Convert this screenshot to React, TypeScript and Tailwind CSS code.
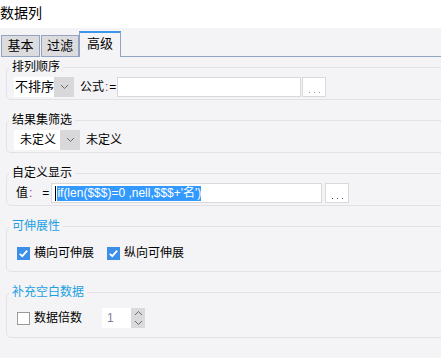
import React from "react";

const font = {
  fontFamily: '"Liberation Sans", "Noto Sans CJK SC", sans-serif',
};

function Chevron({ className = "" }: { className?: string }) {
  return (
    <svg width="9" height="6" viewBox="0 0 9 6" className={className}>
      <path d="M1 1 L4.5 4.5 L8 1" fill="none" stroke="#6b6b6b" strokeWidth="1" />
    </svg>
  );
}

function Select({ label, white, size = "text-[12px]" }: { label: string; white: string; size?: string }) {
  return (
    <div className="flex h-[20px]">
      <div className={`${white} bg-white flex items-center pl-[1px] ${size} text-black`}>{label}</div>
      <div className="w-[20px] bg-[#d8d8db] flex items-center justify-center">
        <Chevron />
      </div>
    </div>
  );
}

function Check({ checked }: { checked: boolean }) {
  if (!checked)
    return <div className="w-[13px] h-[13px] border border-[#9a9a9a] bg-white" />;
  return (
    <div className="w-[13px] h-[13px] bg-[#3b8fe8] flex items-center justify-center">
      <svg width="11" height="11" viewBox="0 0 11 11">
        <path d="M1.8 5.8 L4.3 8.2 L9.2 2.6" fill="none" stroke="white" strokeWidth="1.8" />
      </svg>
    </div>
  );
}

function Group({
  title,
  blue,
  children,
  className = "",
}: {
  title: string;
  blue?: boolean;
  children: React.ReactNode;
  className?: string;
}) {
  return (
    <fieldset className={`ml-[6px] -mr-4 border border-[#e2e2e6] rounded-[5px] ${className}`}>
      <legend
        className={`ml-[2px] px-[3px] text-[12px] leading-[16px] ${blue ? "text-[#1d9fe2]" : "text-black"}`}
      >
        {title}
      </legend>
      {children}
    </fieldset>
  );
}

function Dots({ color }: { color: string }) {
  return (
    <div className="ml-[1px] w-[24px] h-[20px] bg-white border border-[#d9d9d9] flex items-end justify-center pb-[3px] gap-[4px]">
      <span className={`w-[1px] h-[1px] ${color}`} />
      <span className={`w-[1px] h-[1px] ${color}`} />
      <span className={`w-[1px] h-[1px] ${color}`} />
    </div>
  );
}

export default function App() {
  return (
    <div className="w-[441px] h-[358px] overflow-hidden bg-[#f4f4f6]" style={font}>
      <div className="h-[28px] bg-white text-[14px] leading-[26px] text-black">数据列</div>

      <div className="flex items-end h-[29px] pl-[1px]">
        <div className="h-[22px] w-[39px] bg-[#dcdcdf] border border-[#93a4c2] flex items-center justify-center text-[13px]">
          基本
        </div>
        <div className="h-[22px] w-[38px] ml-[1px] bg-[#dcdcdf] border border-[#93a4c2] flex items-center justify-center text-[13px]">
          过滤
        </div>
        <div className="h-[26px] w-[42px] bg-[#f4f4f6] border-x border-[#93a4c2] border-t-2 border-t-[#3d96ea] flex items-center justify-center text-[13px] pb-[2px]">
          高级
        </div>
        <div className="flex-1 border-b border-[#93a4c2]" />
      </div>

      <Group title="排列顺序" className="mt-[2px]">
        <div className="flex items-center h-[20px] mt-[2px] mb-[2px] pl-[7px]">
          <Select label="不排序" white="w-[40px]" size="text-[13px]" />
          <div className="ml-[6px] text-[12px] flex items-center">
            公式<span className="text-[#8a3d8a] px-[1px]">:</span>=
          </div>
          <div className="ml-[1px] w-[184px] h-[20px] bg-white border border-[#d9d9d9]" />
          <Dots color="bg-[#9a9a9a]" />
        </div>
      </Group>

      <Group title="结果集筛选" className="mt-[12px]">
        <div className="flex items-center h-[20px] mt-[2px] mb-[2px] pl-[7px]">
          <Select label="未定义" white="w-[46px] pl-[6px]" />
          <div className="ml-[6px] text-[12px]">未定义</div>
        </div>
      </Group>

      <Group title="自定义显示" className="mt-[12px]">
        <div className="flex items-center h-[20px] mt-[2px] mb-[2px] pl-[9px] text-[12px]">
          <span>值</span>
          <span className="text-[#8a3d8a] ml-[1px]">:</span>
          <span className="ml-[10px]">=</span>
          <div className="ml-[2px] w-[271px] h-[20px] bg-white border border-[#d9d9d9] flex items-center pl-[3px]">
            <span className="w-[1px] h-[15px] bg-black" />
            <span className="ml-[1px] bg-[#3399ff] text-white leading-[15px] h-[15px] whitespace-nowrap">
              if(len($$$)=0 ,nell,$$$+'名')
            </span>
          </div>
          <div className="ml-[2px]">
            <Dots color="bg-[#6b2f7a]" />
          </div>
        </div>
      </Group>

      <Group title="可伸展性" blue className="mt-[12px]">
        <div className="flex items-center h-[20px] mt-[9px] mb-[8px] pl-[10px] text-[12px]">
          <Check checked />
          <span className="ml-[4px]">横向可伸展</span>
          <div className="ml-[13px]">
            <Check checked />
          </div>
          <span className="ml-[4px]">纵向可伸展</span>
        </div>
      </Group>

      <Group title="补充空白数据" blue className="mt-[12px]">
        <div className="flex items-center h-[20px] mt-[8px] mb-[9px] pl-[10px] text-[12px]">
          <Check checked={false} />
          <span className="ml-[4px]">数据倍数</span>
          <div className="ml-[20px] flex h-[20px]">
            <div className="w-[29px] bg-white flex items-center pl-[5px] text-[#8a7a9a]">1</div>
            <div className="w-[14px] bg-[#dadadd] flex flex-col items-center justify-center gap-[4px]">
              <Chevron className="rotate-180" />
              <Chevron />
            </div>
          </div>
        </div>
      </Group>
    </div>
  );
}
